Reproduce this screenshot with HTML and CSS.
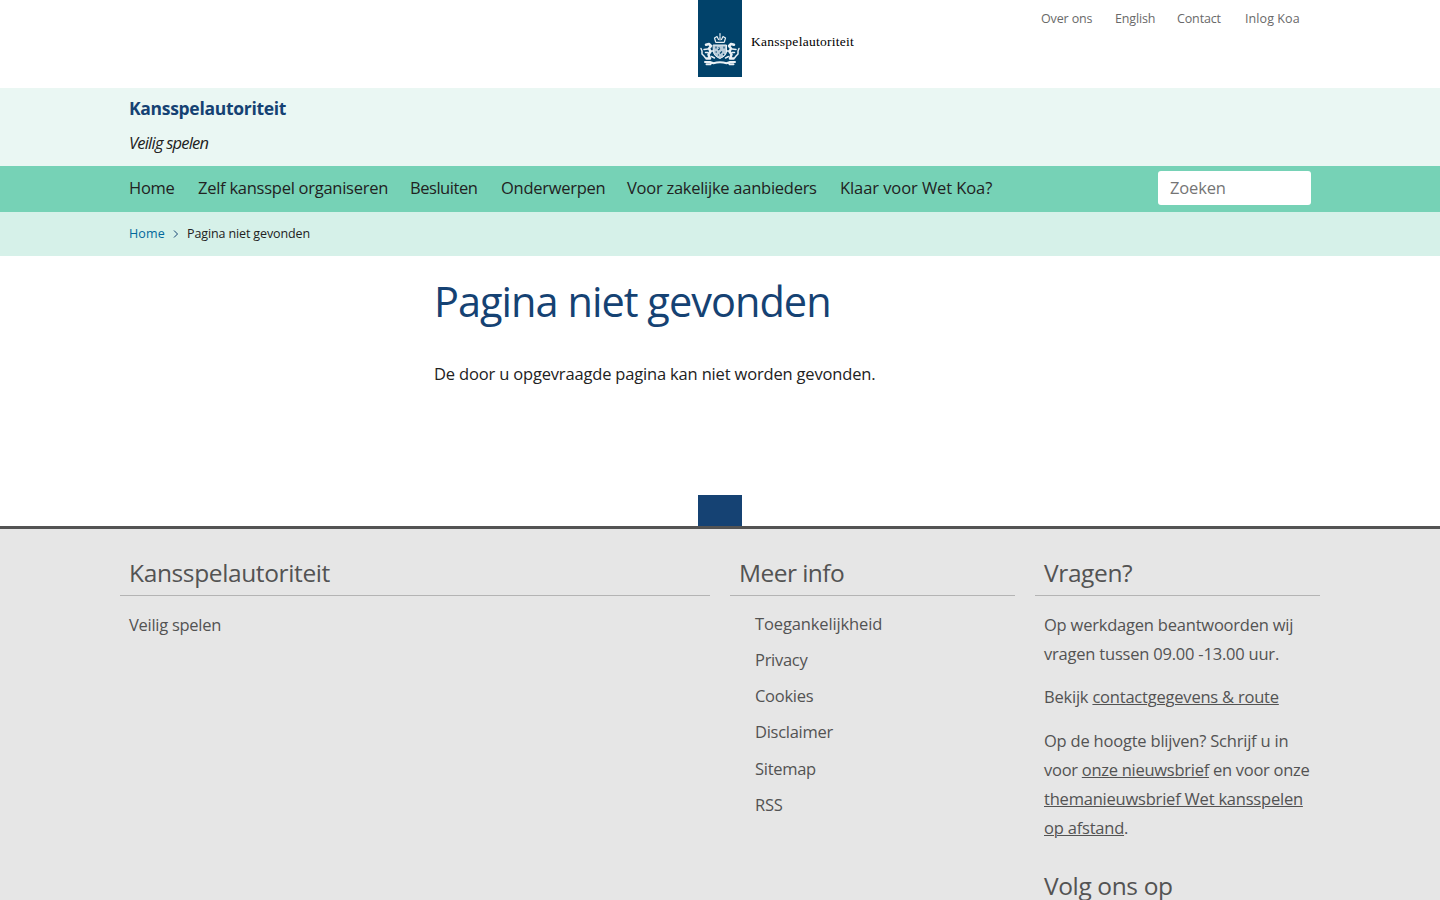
FILE: index.html
```html
<!DOCTYPE html>
<html lang="nl">
<head>
<meta charset="utf-8">
<title>Pagina niet gevonden | Kansspelautoriteit</title>
<link rel="stylesheet" href="styles.css">
</head>
<body>
<header class="top">
  <div class="logo">
    <svg class="logo-mark" width="44" height="77" viewBox="0 0 44 77">
      <rect width="44" height="77" fill="#01426a"/>
      <g fill="none" stroke="#e9f0f5" stroke-linecap="round" stroke-linejoin="round">
        <path stroke-width="1.200" d="M22 33.500v2M17.500 41.500l-1-3.500 2.500-1.500 1.500 3M26.500 41.500l1-3.500-2.500-1.500-1.500 3M22 36.500V40M17.800 42.300h8.400"/>
        <path stroke-width="1" fill="#b9cddb" d="M15.500 45h13v7.500q-1 4-6.500 6-5.500-2-6.500-6z"/>
        <path stroke="#01426a" stroke-width="1.100" stroke-linecap="butt" d="M18 46.500v2M26 46.500v2M20 50l2-1.500M24 51.500l-2 2M17.500 52h1.500M26 54l-1 1M21 47v.8M20.500 55.500v-1"/>
        <path stroke-width="2.500" d="M8 44.800l3-.8 2 2-2 2.500 1.500 3-2 3 1.500 4H8.500M36 44.800l-3-.8-2 2 2 2.500-1.500 3 2 3-1.500 4h3.500"/>
        <path stroke-width="1.500" d="M10 49l-4 .5M10 52.500H7.500M34 49l4 .5M34 52.500h2.500M7.500 58l-1.500-2-2-2v-3l-1-2.500M36.500 58l1.500-2 2-2v-3l1-2.500M13.500 56.500l3 1.500M30.500 56.500l-3 1.500M13.500 51h1.500M30.500 51H29"/>
        <path stroke-width="2" d="M7 62h5l3.500 1.200q6.500-1.800 13 0L32 62h5M8.500 64.200h4M31.500 64.200h4"/>
      </g>
    </svg>
    <span class="logo-text">Kansspelautoriteit</span>
  </div>
  <nav class="service">
    <a>Over ons</a><a>English</a><a>Contact</a><a class="service-last">Inlog Koa</a>
  </nav>
</header>
<div class="title-bar">
  <div class="wrap">
    <p class="site-name">Kansspelautoriteit</p>
    <p class="payoff">Veilig spelen</p>
  </div>
</div>
<div class="nav-bar">
  <div class="wrap nav-row">
    <nav class="main-nav">
      <a>Home</a><a>Zelf kansspel organiseren</a><a class="tight">Besluiten</a><a>Onderwerpen</a><a>Voor zakelijke aanbieders</a><a class="loose">Klaar voor Wet Koa?</a>
    </nav>
    <input class="search" type="text" placeholder="Zoeken">
  </div>
</div>
<div class="crumb-bar">
  <div class="wrap crumbs">
    <a class="crumb-link">Home</a>
    <svg class="chevron" width="6" height="8" viewBox="0 0 6 8"><path d="M1 .5L4.500 4 1 7.500" fill="none" stroke="#154273"/></svg>
    <span>Pagina niet gevonden</span>
  </div>
</div>
<main class="content">
  <h1>Pagina niet gevonden</h1>
  <p class="message">De door u opgevraagde pagina kan niet worden gevonden.</p>
</main>
<div class="footer-tab"></div>
<footer class="footer">
  <div class="footer-grid">
    <section>
      <h2>Kansspelautoriteit</h2>
      <p class="tagline">Veilig spelen</p>
    </section>
    <section>
      <h2 class="tight-heading">Meer info</h2>
      <ul class="links">
        <li class="open">Toegankelijkheid</li><li>Privacy</li><li>Cookies</li><li>Disclaimer</li><li>Sitemap</li><li>RSS</li>
      </ul>
    </section>
    <section>
      <h2>Vragen?</h2>
      <p>Op werkdagen beantwoorden wij<br>vragen tussen 09.00 -13.00 uur.</p>
      <p>Bekijk <a>contactgegevens &amp; route</a></p>
      <p>Op de hoogte blijven? Schrijf u in<br><span class="tighter">voor <a>onze nieuwsbrief</a> en voor onze</span><br><a>themanieuwsbrief Wet kansspelen</a><br><a>op afstand</a>.</p>
      <h2 class="follow">Volg ons op</h2>
    </section>
  </div>
</footer>
</body>
</html>
```

FILE: styles.css
```css
* { box-sizing: border-box; }
html, body { height: 100%; overflow: hidden; }
body {
  margin: 0;
  display: flex;
  flex-direction: column;
  background: #fff;
  color: #222;
  font: 16.5px/29px "Open Sans", "Noto Sans", sans-serif;
  letter-spacing: -0.26px;
}
h1, h2, p, ul { margin: 0; padding: 0; font-weight: 400; }
ul { list-style: none; }

.top {
  flex: none;
  height: 88px;
  display: grid;
  grid-template-columns: 343px 399px;
  padding-left: 698px;
}
.logo { display: flex; align-items: flex-start; }
.logo-mark { display: block; }
.logo-text {
  padding: 33px 0 0 9px;
  font: 13.5px/18px "Liberation Serif", serif;
  letter-spacing: 0.27px;
  color: #000;
}
.service {
  display: grid;
  grid-template-columns: 74px 62px 68px auto;
  padding-top: 10px;
  font-size: 12.5px;
  line-height: 18px;
  letter-spacing: -0.14px;
  color: #696969;
}
.service-last { letter-spacing: 0.08px; }

.wrap { width: 1182px; margin-left: 129px; }
.title-bar { flex: none; height: 78px; background: #eaf7f3; }
.site-name {
  padding-top: 6px;
  font-size: 17.5px;
  font-weight: 700;
  line-height: 29px;
  letter-spacing: -0.3px;
  color: #154273;
}
.payoff { padding-top: 5px; font-style: italic; letter-spacing: -0.78px; }

.nav-bar { flex: none; height: 46px; background: #76d2b6; }
.nav-row { display: flex; justify-content: space-between; padding-top: 5px; }
.main-nav {
  display: grid;
  grid-template-columns: 69px 212px 91px 126px 213px auto;
  line-height: 34px;
  white-space: nowrap;
}
.tight { letter-spacing: -0.46px; }
.loose { letter-spacing: -0.08px; }
.search {
  width: 153px;
  height: 34px;
  padding: 0 12px 2px;
  border: 0;
  border-radius: 3px;
  background: #fff;
  font: inherit;
  letter-spacing: -0.15px;
}
.search::placeholder { color: #757575; opacity: 1; }

.crumb-bar { flex: none; height: 44px; background: #d6f1e9; }
.crumbs {
  display: flex;
  align-items: center;
  height: 43px;
  font-size: 12.5px;
  letter-spacing: -0.12px;
}
.crumb-link { width: 44px; letter-spacing: 0.15px; color: #01689b; }
.chevron { width: 6px; margin-right: 8px; }

.content { flex: none; height: 239px; padding: 17px 0 0 434px; }
h1 {
  font-size: 41.5px;
  line-height: 56px;
  letter-spacing: -0.98px;
  color: #154273;
}
.message { padding-top: 30px; letter-spacing: -0.17px; }

.footer-tab { flex: none; width: 44px; height: 31px; margin: 0 auto; background: #154273; }
.footer {
  flex: 1;
  min-height: 0;
  overflow: hidden;
  border-top: 3px solid #535353;
  background: #e6e6e6;
  color: #535353;
}
.footer-grid {
  display: grid;
  grid-template-columns: 590px 285px 285px;
  column-gap: 20px;
  width: 1200px;
  margin: 0 auto;
  padding-top: 24px;
}
h2 {
  height: 43px;
  margin-bottom: 14px;
  padding-left: 9px;
  border-bottom: 1px solid #b4b4b4;
  font-size: 24.5px;
  line-height: 40px;
  letter-spacing: -0.37px;
}
.tight-heading { letter-spacing: -0.55px; }
.footer p { padding-left: 9px; margin-bottom: 14.4px; white-space: nowrap; letter-spacing: -0.21px; }
.footer .tagline, .tighter { letter-spacing: -0.27px; }
.footer a { text-decoration: underline; text-underline-offset: 1px; text-decoration-thickness: 1px; }
.links { padding-left: 25px; margin-top: -4.200px; line-height: 36.200px; letter-spacing: -0.28px; }
.open { letter-spacing: -0.13px; }
.follow { margin-top: 24px; border: 0; }
```
